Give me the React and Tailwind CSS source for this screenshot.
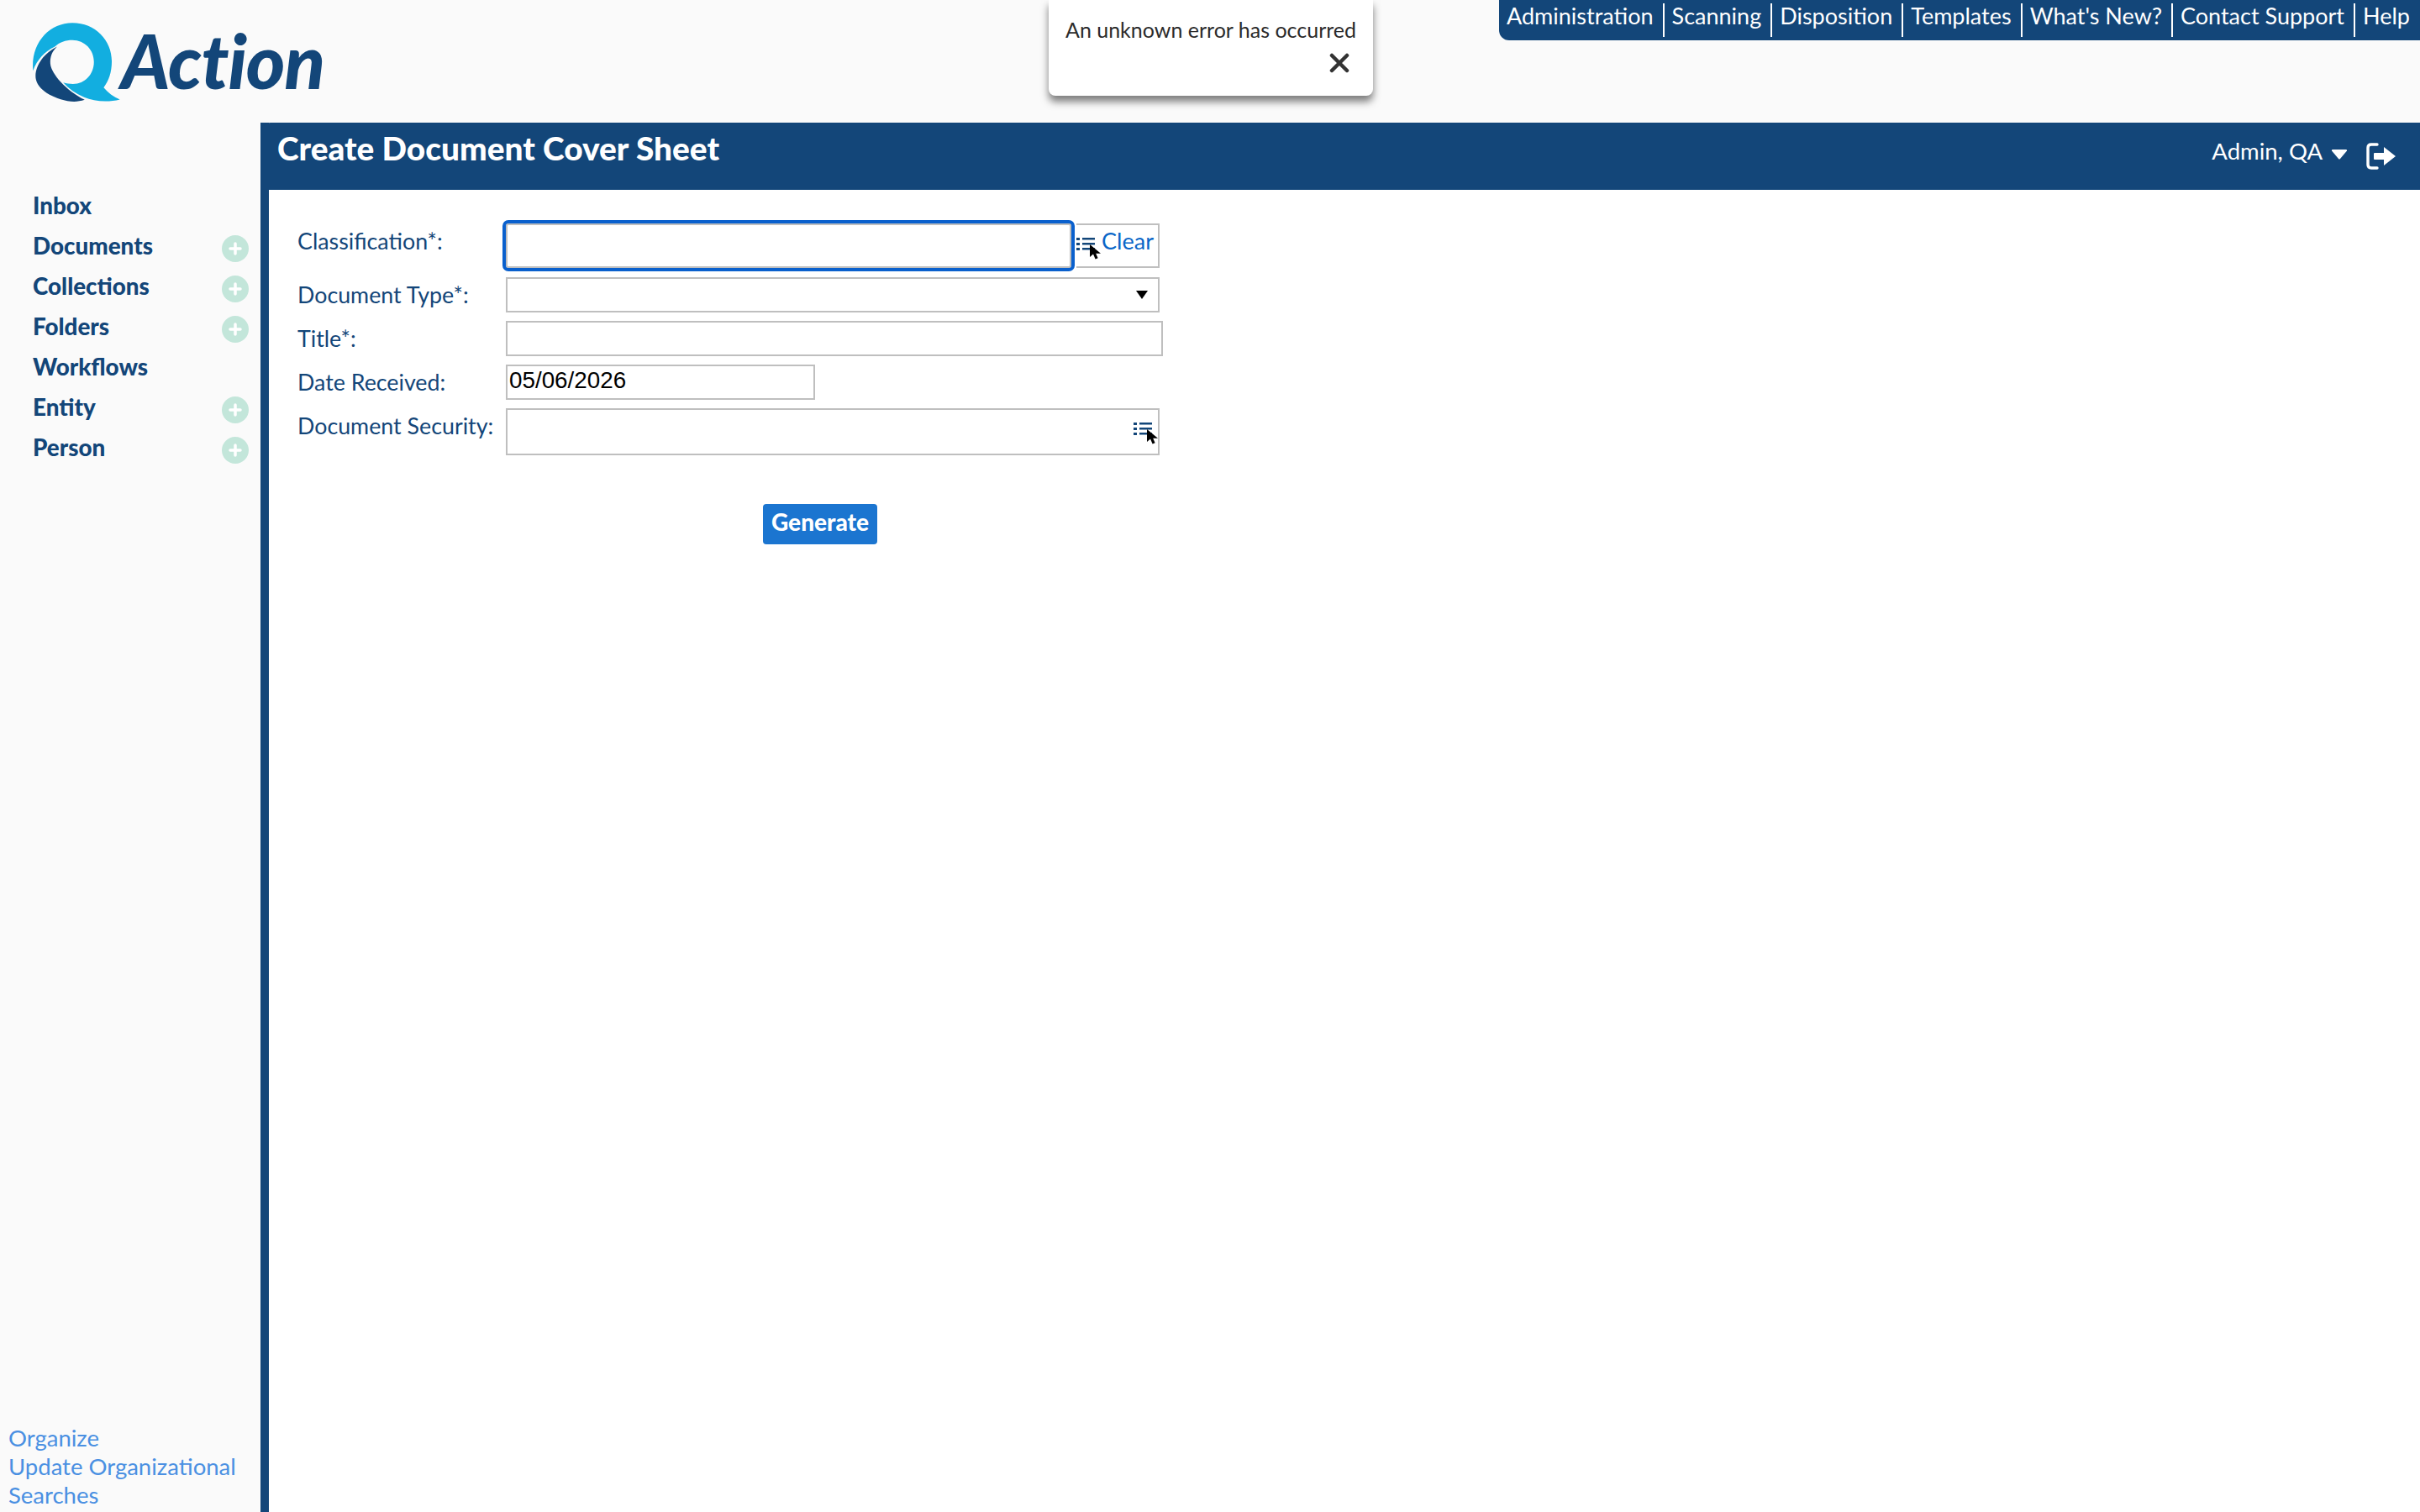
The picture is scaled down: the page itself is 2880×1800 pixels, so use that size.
import React from 'react';

const navLinks = ['Administration', 'Scanning', 'Disposition', 'Templates', "What's New?", 'Contact Support', 'Help'];

const sideLinks = [
  { label: 'Inbox' },
  { label: 'Documents', add: true },
  { label: 'Collections', add: true },
  { label: 'Folders', add: true },
  { label: 'Workflows' },
  { label: 'Entity', add: true },
  { label: 'Person', add: true },
];

function QMark() {
  return (
    <svg viewBox="110 72 325 294" className="w-[108px] h-[98px] shrink-0">
      <path
        fill="#12aee0"
        d="M117 250 C108 150 175 78 258 78 C340 78 399 140 399 215 C399 255 388 285 370 310 C385 328 405 343 428 353 C385 364 335 360 300 345 C270 332 245 315 225 292 C236 296 248 297 260 297 C303 297 335 262 335 218 C335 175 302 140 258 140 C233 140 212 148 195 163 C160 180 130 210 117 250 Z"
      />
      <path
        fill="#134679"
        d="M203 163 C185 180 177 200 179 225 C183 262 235 320 302 354 C280 361 262 362 240 358 C175 345 125 310 126 268 C127 225 160 185 203 163 Z"
      />
    </svg>
  );
}

function ListIcon() {
  return (
    <svg viewBox="0 0 22 16" className="w-[22px] h-4" fill="#134679">
      <rect x="0" y="1" width="4" height="3" />
      <rect x="7" y="1" width="15" height="2.5" />
      <rect x="0" y="7" width="4" height="3" />
      <rect x="7" y="7" width="15" height="2.5" />
      <rect x="0" y="13" width="4" height="3" />
      <rect x="7" y="13" width="15" height="2.5" />
    </svg>
  );
}

function Cursor() {
  return (
    <svg viewBox="0 0 14 18" className="absolute left-4 top-[9px] w-[14px] h-[18px]" fill="#000">
      <path d="M0 0 L0 15 L4 11.6 L6.6 17.5 L9.6 16.2 L7.2 10.8 L13 10.8 Z" />
    </svg>
  );
}

function PickerIcon() {
  return (
    <div className="relative w-[22px] h-4">
      <ListIcon />
      <Cursor />
    </div>
  );
}

function FormRow({ label, children }) {
  return (
    <div className="flex items-start">
      <label className="w-[248px] h-[42px] leading-[42px] whitespace-nowrap shrink-0 text-[26.8px] text-[#134679]">{label}</label>
      {children}
    </div>
  );
}

export default function App() {
  return (
    <div className="relative flex flex-col w-screen h-screen overflow-hidden bg-[#fafafa] text-[27px] font-['Lato','Open_Sans',sans-serif]">
      {/* top strip */}
      <header className="flex justify-between items-start h-[146px] shrink-0">
        <div className="flex items-start pl-[37px] pt-[25px]">
          <QMark />
          <span className="text-[#134679] text-[89px] leading-none font-black italic -ml-[1px] mt-[2px] tracking-[-1px]">Action</span>
        </div>
        <nav className="flex items-center h-12 w-[1096px] bg-[#134679] rounded-bl-xl text-white">
          {navLinks.map((link, i) => (
            <a key={link} className={`h-10 leading-[30px] pl-[9px] pr-[11px] whitespace-nowrap ${i > 0 ? 'border-l-2 border-white' : ''}`}>
              {link}
            </a>
          ))}
        </nav>
      </header>

      {/* error toast */}
      <div className="absolute top-0 left-[1248px] w-[386px] h-[114px] px-5 pt-[17px] bg-white rounded-b-lg shadow-[0_7px_10px_rgba(0,0,0,0.5)] text-[25px] text-[#2b2b2b]">
        <div className="leading-9 whitespace-nowrap">An unknown error has occurred</div>
        <div className="flex justify-end pr-2 mt-[10px]">
          <svg viewBox="0 0 24 24" className="w-6 h-6" stroke="#333" strokeWidth="4.5" strokeLinecap="round">
            <path d="M3 3 L21 21 M21 3 L3 21" />
          </svg>
        </div>
      </div>

      <div className="flex flex-1 min-h-0">
        <aside className="flex flex-col justify-between w-[310px] shrink-0">
          <ul className="pt-[75px]">
            {sideLinks.map((item) => (
              <li key={item.label} className="flex items-center justify-between h-12 pl-[39px] pr-[14px] text-[27.8px] font-black text-[#134679]">
                <span>{item.label}</span>
                {item.add && (
                  <span className="flex items-center justify-center w-8 h-8 mt-[5px] rounded-full bg-[#c3e6da]">
                    <svg viewBox="0 0 16 16" className="w-4 h-4" stroke="#fff" strokeWidth="3.5" strokeLinecap="round">
                      <path d="M8 2 V14 M2 8 H14" />
                    </svg>
                  </span>
                )}
              </li>
            ))}
          </ul>
          <div className="pl-[10px] pr-4 pb-[3px] text-[27.5px] leading-[34px] text-[#4a90e2]">
            <div>Organize</div>
            <div>Update Organizational Searches</div>
          </div>
        </aside>

        <main className="flex flex-col flex-1 min-w-0 border-l-[10px] border-[#134679] bg-white relative">
          <div className="flex justify-between h-[80px] -ml-[10px] rounded-tl-xl bg-[#134679] text-white">
            <h1 className="pl-5 pt-2 text-[38.8px] leading-[44px] font-black">Create Document Cover Sheet</h1>
            <div className="flex items-start pr-[28px] pt-4">
              <span className="leading-9 text-[27.5px]">Admin, QA</span>
              <svg viewBox="0 0 20 12" className="w-5 h-3 ml-[10px] mt-4" fill="#fff">
                <path d="M1 1.5 Q0.5 0 2 0 H18 Q19.5 0 19 1.5 L11 11 Q10 12 9 11 Z" />
              </svg>
              <svg viewBox="0 0 36 32" className="w-9 h-8 ml-[22px] mt-2" fill="#fff">
                <path d="M13 2 H6 Q2 2 2 6 V26 Q2 30 6 30 H13" fill="none" stroke="#fff" strokeWidth="3.4" strokeLinecap="round" />
                <path d="M10 12 H21 V5 L35 16 L21 27 V20 H10 Q9 20 9 19 V13 Q9 12 10 12 Z" />
              </svg>
            </div>
          </div>

          <form className="flex flex-col pt-10 pl-[34px]">
            <FormRow label="Classification*:">
              <div className="flex w-[778px] h-[53px]">
                <input className="w-[673px] h-[53px] shrink-0 border-2 border-[#bfbfbf] rounded-[3px] outline-4 outline-[#0a60cd]" />
                <div className="flex flex-1 justify-between items-start pt-1 ml-[6px] pr-[5px] border-y-2 border-r-2 border-[#bfbfbf]">
                  <div className="mt-[10px]"><PickerIcon /></div>
                  <a className="leading-[30px] text-[#0a66c8]">Clear</a>
                </div>
              </div>
            </FormRow>
            <div className="mt-[11px]">
              <FormRow label="Document Type*:">
                <div className="flex justify-end items-center w-[778px] h-[42px] pr-[12px] border-2 border-[#bfbfbf] bg-white">
                  <svg viewBox="0 0 14 10" className="w-[14px] h-[10px]" fill="#000">
                    <path d="M0 0 H14 L7 10 Z" />
                  </svg>
                </div>
              </FormRow>
            </div>
            <div className="mt-[10px]">
              <FormRow label="Title*:">
                <input className="w-[782px] h-[42px] border-2 border-[#bfbfbf]" />
              </FormRow>
            </div>
            <div className="mt-[10px]">
              <FormRow label="Date Received:">
                <input
                  readOnly
                  value="05/06/2026"
                  className="w-[368px] h-[42px] pl-[2px] pb-1 border-2 border-[#bfbfbf] text-black text-[27.8px] font-['Liberation_Sans',sans-serif]"
                />
              </FormRow>
            </div>
            <div className="mt-[10px]">
              <FormRow label="Document Security:">
                <div className="flex justify-end w-[778px] h-14 pt-[14px] pr-[7px] border-2 border-[#bfbfbf]">
                  <PickerIcon />
                </div>
              </FormRow>
            </div>
            <button type="button" className="self-start w-[136px] h-12 mt-[58px] ml-[554px] pb-[6px] rounded bg-[#1b75d0] text-[28px] text-white font-black">
              Generate
            </button>
          </form>
        </main>
      </div>
    </div>
  );
}
